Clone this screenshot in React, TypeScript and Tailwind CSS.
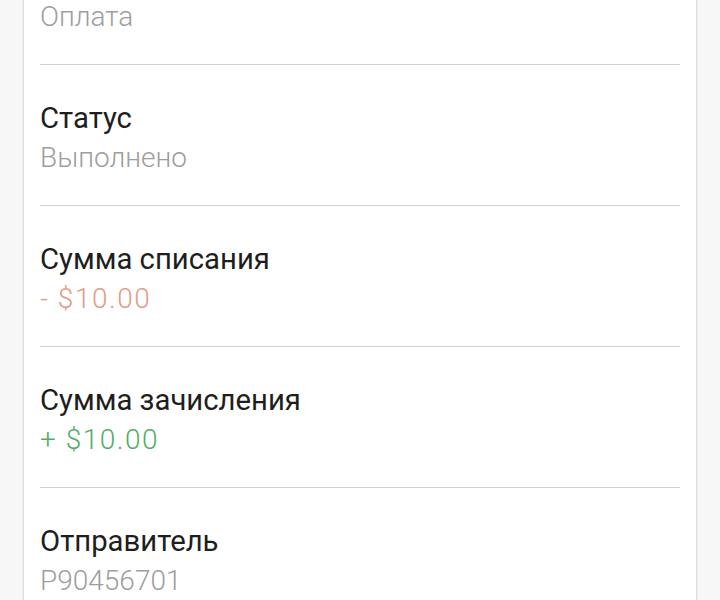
const rows = [
  { label: "Тип операции", value: "Оплата", color: "text-[#9e9e9e]" },
  { label: "Статус", value: "Выполнено", color: "text-[#9e9e9e]" },
  { label: "Сумма списания", value: "- $10.00", color: "text-[#e39c88] tracking-[1.5px]" },
  { label: "Сумма зачисления", value: "+ $10.00", color: "text-[#52ad68] tracking-[1.5px]" },
  { label: "Отправитель", value: "P90456701", color: "text-[#9e9e9e]" },
]

export default function App() {
  return (
    <div className="h-[600px] overflow-hidden bg-[#f7f7f7] font-['Roboto',sans-serif]">
      <div className="mx-6 -mt-[76px] bg-white px-4 shadow-[0_0_2px_1px_rgba(0,0,0,0.14)] min-h-[800px]">
        {rows.map((row, i) => (
          <div key={row.label} className={i < rows.length - 1 ? "border-b border-[#cfcfcf]" : ""}>
            <div className="pt-[33px] pb-[27px] leading-[40px]">
              <div className="text-[29.3px] text-[#1e1e1e]">{row.label}</div>
              <div className={`text-[28px] font-light ${row.color}`}>{row.value}</div>
            </div>
          </div>
        ))}
      </div>
    </div>
  )
}
